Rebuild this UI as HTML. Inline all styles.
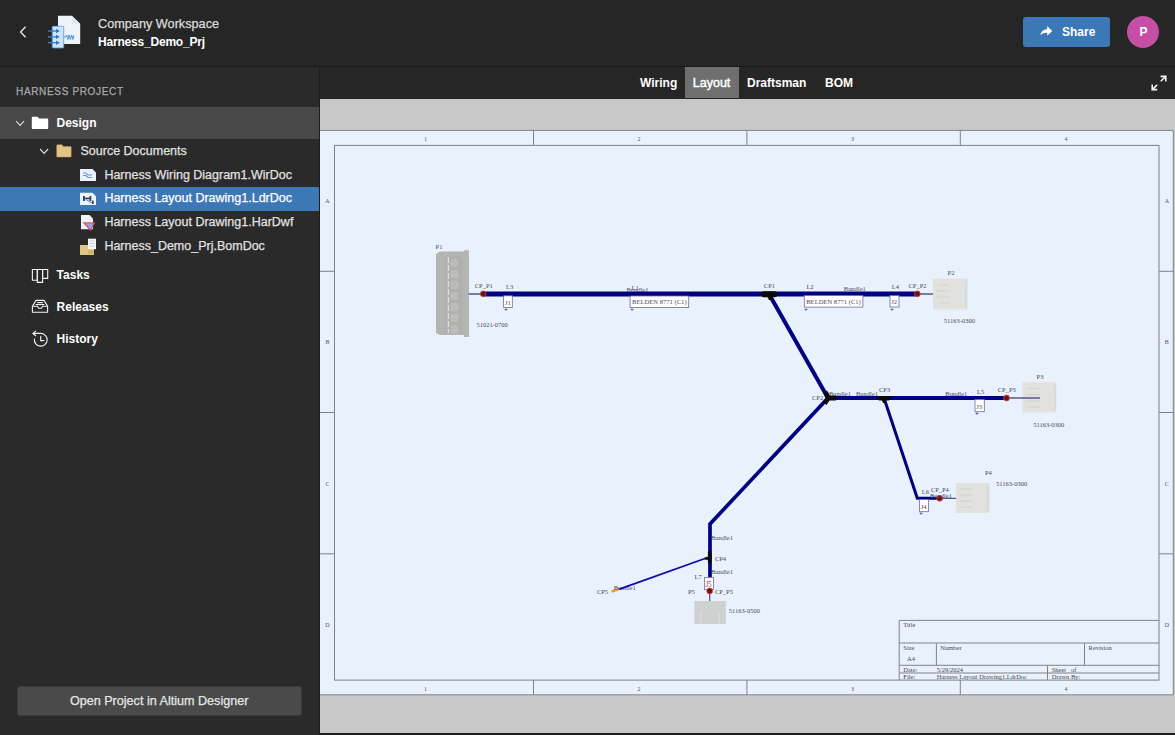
<!DOCTYPE html>
<html><head><meta charset="utf-8">
<style>
*{box-sizing:border-box;margin:0;padding:0}
html,body{width:1175px;height:735px;overflow:hidden;background:#262626;font-family:"Liberation Sans",sans-serif;color:#e6e6e6}
.abs{position:absolute}
#hdr{left:0;top:0;width:1175px;height:67px;background:#262626;border-bottom:1px solid #1a1a1a}
#side{left:0;top:67px;width:320px;height:668px;background:#2a2a2a;border-right:1px solid #1c1c1c}
#tabs{left:320px;top:67px;width:855px;height:32px;background:#262626}
#canvas{left:320px;top:99px;width:855px;height:634px;background:#c8c8c8}
#bot{left:320px;top:733px;width:855px;height:2px;background:#1d1d1d}
.t{position:absolute;white-space:nowrap;line-height:1;-webkit-text-stroke:0.25px currentColor}
.t[style*="bold"]{-webkit-text-stroke:0}
</style></head><body>
<div id="hdr" class="abs"></div>
<div id="side" class="abs"></div>
<div id="tabs" class="abs"></div>
<div id="canvas" class="abs"></div>
<div id="bot" class="abs"></div>

<!-- header -->
<svg class="abs" style="left:17px;top:24px" width="14" height="16" viewBox="17 24 14 16"><path d="M25.6 26.8 L20.6 32 L25.6 37.2" fill="none" stroke="#dedede" stroke-width="1.5"/></svg>
<svg class="abs" style="left:44px;top:12px" width="40" height="40" viewBox="44 12 40 40">
<path d="M58 15.8 H71.8 L80.2 23.7 V44.1 H58 Z" fill="#eef3f9"/>
<path d="M71.8 15.8 V23.7 H80.2" fill="#dfe6ee"/>
<path d="M63.8 37 H65.6 L66.6 34.9 L67.9 39.5 L69.1 34.9 L70.4 39.5 L71.6 34.9 L72.9 39.5 L73.9 35.2" fill="none" stroke="#3d88dc" stroke-width="0.9"/>
<rect x="52.3" y="26.3" width="11.4" height="21.6" rx="1" fill="#cfe4f8" stroke="#5ea2e8" stroke-width="0.9"/>
<g stroke="#3a7fd0" stroke-width="1.4"><path d="M48 31 H57"/><path d="M48 36.9 H57"/><path d="M48 42.7 H57"/></g>
<g fill="#2a78d4"><path d="M56 28.8 L59.8 31 L56 33.2Z"/><path d="M56 34.7 L59.8 36.9 L56 39.1Z"/><path d="M56 40.5 L59.8 42.7 L56 44.9Z"/></g>
</svg>
<div class="t" style="left:98px;top:18.2px;font-size:12.7px;color:#dcdcdc">Company Workspace</div>
<div class="t" style="left:98px;top:35.6px;font-size:12px;font-weight:bold;letter-spacing:-0.2px;color:#fff">Harness_Demo_Prj</div>

<div class="abs" style="left:1023px;top:17px;width:87px;height:30px;background:#3b78b5;border-radius:3px"></div>
<svg class="abs" style="left:1038px;top:24px" width="16" height="14" viewBox="1038 24 16 14"><path d="M1047.2 26 L1052.2 30.9 L1047.2 35.8 V32.9 C1044 32.7 1042 33.6 1040.2 35.6 C1040.9 31.6 1043.3 29.4 1047.2 29 Z" fill="#fff"/></svg>
<div class="t" style="left:1062px;top:25.7px;font-size:12px;font-weight:bold;color:#fff">Share</div>
<div class="abs" style="left:1127px;top:15.5px;width:32px;height:32px;background:#c64fa6;border-radius:50%"></div>
<div class="t" style="left:1139.5px;top:25.7px;font-size:12px;font-weight:bold;color:#fff">P</div>

<!-- tabs -->
<div class="abs" style="left:685px;top:67px;width:54px;height:31px;background:#6f6f6f"></div>
<div class="t" style="left:640px;top:76.7px;font-size:12px;font-weight:bold;color:#fff">Wiring</div>
<div class="t" style="left:692.8px;top:77.2px;font-size:12.5px;color:#fff;-webkit-text-stroke:0.45px #fff">Layout</div>
<div class="t" style="left:747px;top:76.7px;font-size:12px;font-weight:bold;color:#fff">Draftsman</div>
<div class="t" style="left:825px;top:76.7px;font-size:12px;font-weight:bold;color:#fff">BOM</div>
<svg class="abs" style="left:1148px;top:72px" width="22" height="22" viewBox="1148 72 22 22"><g fill="none" stroke="#f4f4f4" stroke-width="1.6"><path d="M1160.8 81.2 L1165.4 76.6"/><path d="M1160.6 76.4 H1165.8 V81.4"/><path d="M1157.2 84.8 L1152.6 89.4"/><path d="M1152.2 84.6 V89.6 H1157.2"/></g></svg>

<!-- sidebar -->
<div class="t" style="left:16px;top:86.8px;font-size:10px;letter-spacing:0.66px;color:#a8a8a8">HARNESS PROJECT</div>
<div class="abs" style="left:0;top:107px;width:319px;height:32px;background:#484848"></div>
<svg class="abs" style="left:14px;top:118px" width="12" height="10" viewBox="14 118 12 10"><path d="M16.2 121.2 L20.1 125.4 L24 121.2" fill="none" stroke="#dcdcdc" stroke-width="1.15"/></svg>
<svg class="abs" style="left:30px;top:115px" width="20" height="16" viewBox="30 115 20 16"><path d="M32.3 116.7 H37.6 L39.2 118.6 H47.4 Q48.2 118.6 48.2 119.4 V128.3 Q48.2 129.1 47.4 129.1 H32.6 Q31.8 129.1 31.8 128.3 V117.2 Q31.8 116.7 32.3 116.7Z" fill="#fff"/></svg>
<div class="t" style="left:56.5px;top:116.8px;font-size:12px;font-weight:bold;color:#fff">Design</div>

<svg class="abs" style="left:38px;top:146px" width="12" height="10" viewBox="38 146 12 10"><path d="M40.1 149 L44.1 153.3 L48.1 149" fill="none" stroke="#dcdcdc" stroke-width="1.15"/></svg>
<svg class="abs" style="left:55px;top:143px" width="18" height="16" viewBox="55 143 18 16"><path d="M57.2 144.8 H62 L63.4 146.6 H70.6 Q71.2 146.6 71.2 147.2 V156.4 Q71.2 157 70.6 157 H57.3 Q56.7 157 56.7 156.4 V145.3 Q56.7 144.8 57.2 144.8Z" fill="#e2c584" stroke="#b99452" stroke-width="0.5"/></svg>
<div class="t" style="left:80.5px;top:144.7px;font-size:12.5px;color:#e0e0e0">Source Documents</div>

<svg class="abs" style="left:78px;top:167px" width="20" height="16" viewBox="78 167 20 16"><path d="M80 169 H92.5 L96 172.4 V181 H80Z" fill="#eaf2fb"/><g fill="none" stroke="#6f8fe0" stroke-width="1.1"><path d="M83 173 H86 L88 175 H92"/><path d="M83 175.5 H86 L88 177.5 H92"/></g></svg>
<div class="t" style="left:104.4px;top:168.5px;font-size:12.5px;color:#e0e0e0">Harness Wiring Diagram1.WirDoc</div>

<div class="abs" style="left:0;top:187px;width:319px;height:24px;background:#3b78b5"></div>
<svg class="abs" style="left:78px;top:191px" width="20" height="16" viewBox="78 191 20 16"><path d="M80 192.8 H92.5 L96 196.2 V205 H80Z" fill="#eaf2fb"/><g fill="#3a3f48"><rect x="83" y="196" width="1.8" height="5"/><rect x="89.5" y="196" width="1.8" height="5"/><rect x="83" y="197.6" width="8" height="1.6"/><rect x="92" y="200.5" width="1.6" height="3.5"/></g><path d="M86 199.5 L92 203" stroke="#4d7fd8" stroke-width="1"/></svg>
<div class="t" style="left:104.4px;top:192.4px;font-size:12.5px;color:#fff">Harness Layout Drawing1.LdrDoc</div>

<svg class="abs" style="left:78px;top:213px" width="20" height="20" viewBox="78 213 20 20"><path d="M81 215 H89.5 L93 218.5 V229.3 H81Z" fill="#eef2f7"/><path d="M82.5 222.3 L95.5 222.3 L90.5 231.2Z" fill="#d04848" opacity="0.9"/><path d="M85.5 223.6 L93.5 223.6 L90.3 229Z" fill="#8fa8e8"/></svg>
<div class="t" style="left:104.4px;top:216.1px;font-size:12.5px;color:#e0e0e0">Harness Layout Drawing1.HarDwf</div>

<svg class="abs" style="left:78px;top:237px" width="20" height="20" viewBox="78 237 20 20"><rect x="80" y="245" width="14" height="10" fill="#e2c584"/><rect x="88" y="238.7" width="8" height="10.5" fill="#f4f6f8"/><g stroke="#b9c0c8" stroke-width="0.7"><path d="M89.5 241 H94.5"/><path d="M89.5 243.5 H94.5"/><path d="M89.5 246 H94.5"/></g><g stroke="#b99452" stroke-width="0.7"><path d="M88 251 H94"/><path d="M88 253 H94"/></g></svg>
<div class="t" style="left:104.4px;top:240px;font-size:12.5px;color:#e0e0e0">Harness_Demo_Prj.BomDoc</div>

<svg class="abs" style="left:30px;top:267px" width="20" height="18" viewBox="30 267 20 18"><g fill="none" stroke="#f2f2f2" stroke-width="1.1"><path d="M32.4 269.5 H37.3 V280.3 H32.4Z"/><path d="M37.3 269.5 H42.6 V282.4 H37.3Z"/><path d="M42.6 269.5 H47.7 V278.4 H42.6Z"/></g></svg>
<div class="t" style="left:56.6px;top:268.9px;font-size:12px;font-weight:bold;color:#fff">Tasks</div>
<svg class="abs" style="left:30px;top:298px" width="20" height="17" viewBox="30 298 20 17"><g fill="none" stroke="#f2f2f2" stroke-width="1.1"><path d="M32.4 306.2 L36 300.4 H44 L47.6 306.2 V312.2 H32.4Z"/><path d="M32.4 306.2 H37.4 L38.6 308.2 H41.4 L42.6 306.2 H47.6"/><path d="M37.2 302.6 H42.9"/><path d="M35.7 304.5 H44.3"/></g></svg>
<div class="t" style="left:56.6px;top:300.8px;font-size:12px;font-weight:bold;color:#fff">Releases</div>
<svg class="abs" style="left:30px;top:329px" width="20" height="20" viewBox="30 329 20 20"><g fill="none" stroke="#f2f2f2" stroke-width="1.15" stroke-linecap="round"><path d="M34.4 339 A6.4 6.4 0 1 0 41 333.4 H33.2"/><path d="M35.7 331.1 L33 333.4 L35.7 335.7"/><path d="M40.7 336.4 V340.6 H43.9"/></g></svg>
<div class="t" style="left:56.6px;top:332.6px;font-size:12px;font-weight:bold;color:#fff">History</div>

<div class="abs" style="left:17px;top:685.5px;width:285px;height:30.5px;background:#4a4a4a;border-radius:3px;border:1px solid #3a3a3a"></div>
<div class="t" style="left:69.9px;top:695px;font-size:12.6px;color:#e6e6e6">Open Project in Altium Designer</div>

<!-- drawing -->
<svg class="abs" style="left:320px;top:99px" width="855" height="634" viewBox="320 99 855 634" font-family="Liberation Serif, serif">
<rect x="320" y="130" width="853.5" height="565" fill="#e9f1fd"/>
<g fill="none" stroke="#7d838b" stroke-width="1">
<path d="M320 130.4 H1173.3 V695"/><path d="M320 694.8 H1173.3"/>
<rect x="334.5" y="145.4" width="824.5" height="534.7"/>
<path d="M533.5 130.4 V145.4 M533.5 680 V694.8"/>
<path d="M746.9 130.4 V145.4 M746.9 680 V694.8"/>
<path d="M960.3 130.4 V145.4 M960.3 680 V694.8"/>
<path d="M320 271.3 H334.5 M1159 271.3 H1173.3"/>
<path d="M320 412.5 H334.5 M1159 412.5 H1173.3"/>
<path d="M320 553.8 H334.5 M1159 553.8 H1173.3"/>
<path d="M899.2 620.4 H1159 M899.2 620.4 V680 M899.2 643 H1159 M899.2 665.3 H1159 M899.2 673 H1159 M936.4 643 V665.3 M1084.5 643 V665.3 M1047.5 665.3 V680"/>
</g>
<g fill="#50545e">
<text transform="translate(425.6 140.8) scale(1 1.06)" font-size="6" text-anchor="middle">1</text>
<text transform="translate(425.6 690.6) scale(1 1.06)" font-size="6" text-anchor="middle">1</text>
<text transform="translate(639.1 140.8) scale(1 1.06)" font-size="6" text-anchor="middle">2</text>
<text transform="translate(639.1 690.6) scale(1 1.06)" font-size="6" text-anchor="middle">2</text>
<text transform="translate(852.6 140.8) scale(1 1.06)" font-size="6" text-anchor="middle">3</text>
<text transform="translate(852.6 690.6) scale(1 1.06)" font-size="6" text-anchor="middle">3</text>
<text transform="translate(1066.1 140.8) scale(1 1.06)" font-size="6" text-anchor="middle">4</text>
<text transform="translate(1066.1 690.6) scale(1 1.06)" font-size="6" text-anchor="middle">4</text>
<text transform="translate(327.5 203.0) scale(1 1.06)" font-size="6" text-anchor="middle">A</text>
<text transform="translate(1166.8 203.0) scale(1 1.06)" font-size="6" text-anchor="middle">A</text>
<text transform="translate(327.5 344.29999999999995) scale(1 1.06)" font-size="6" text-anchor="middle">B</text>
<text transform="translate(1166.8 344.29999999999995) scale(1 1.06)" font-size="6" text-anchor="middle">B</text>
<text transform="translate(327.5 485.5) scale(1 1.06)" font-size="6" text-anchor="middle">C</text>
<text transform="translate(1166.8 485.5) scale(1 1.06)" font-size="6" text-anchor="middle">C</text>
<text transform="translate(327.5 626.8) scale(1 1.06)" font-size="6" text-anchor="middle">D</text>
<text transform="translate(1166.8 626.8) scale(1 1.06)" font-size="6" text-anchor="middle">D</text>
</g>
<g fill="#44474f">
<text transform="translate(903.3 626.9) scale(1 1.06)" font-size="6.5">Title</text>
<text transform="translate(903.3 649.9) scale(1 1.06)" font-size="6.5">Size</text>
<text transform="translate(907 660.9) scale(1 1.06)" font-size="6.5">A4</text>
<text transform="translate(940.3 649.9) scale(1 1.06)" font-size="6.5">Number</text>
<text transform="translate(1088.6 649.9) scale(1 1.06)" font-size="6.5">Revision</text>
<text transform="translate(903.3 671.6) scale(1 1.06)" font-size="6.5">Date:</text>
<text transform="translate(936.7 671.6) scale(1 1.06)" font-size="6.5">5/29/2024</text>
<text transform="translate(903.3 678.8) scale(1 1.06)" font-size="6.5">File:</text>
<text transform="translate(936.7 678.8) scale(1 1.06)" font-size="6.5">Harness Layout Drawing1.LdrDoc</text>
<text transform="translate(1051.7 671.6) scale(1 1.06)" font-size="6.5">Sheet&#160;&#160;&#160;of</text>
<text transform="translate(1051.7 678.8) scale(1 1.06)" font-size="6.5">Drawn By:</text>
</g>
<g>
<path d="M436 254 L440 251.5 H464 V250.2 H469 V337 H464 V335 H440 L436 333Z" fill="#b4b4b2"/>
<rect x="445" y="256" width="17" height="77" fill="#b0b0ae"/>
<path d="M448.3 257 V333" stroke="#ececea" stroke-width="1" stroke-dasharray="6 2"/>
<g fill="#bcbcba"><rect x="450.5" y="259" width="8" height="8" rx="2.5"/><rect x="450.5" y="270" width="8" height="8" rx="2.5"/><rect x="450.5" y="281" width="8" height="8" rx="2.5"/><rect x="450.5" y="292" width="8" height="8" rx="2.5"/><rect x="450.5" y="303" width="8" height="8" rx="2.5"/><rect x="450.5" y="314" width="8" height="8" rx="2.5"/><rect x="450.5" y="325" width="8" height="8" rx="2.5"/></g>
<rect x="933" y="278.6" width="34.6" height="31" fill="#e1e1de"/>
<g stroke="#cdcdca" stroke-width="0.8"><path d="M938 285 H949 M936 291 H950 M936 297 H950 M938 303 H949 M966 281 V307"/></g>
<rect x="1022.6" y="382.3" width="33.8" height="30.1" fill="#e1e1de"/>
<g stroke="#cdcdca" stroke-width="0.8"><path d="M1028 388.5 H1039 M1026 394.5 H1040 M1026 401 H1040 M1028 407 H1039 M1055 385 V410"/></g>
<rect x="956" y="483" width="33.5" height="30" fill="#e1e1de"/>
<g stroke="#cdcdca" stroke-width="0.8"><path d="M961 489 H972 M959 495 H973 M959 501 H973 M961 507 H972 M988 486 V511"/></g>
<rect x="694.4" y="601" width="31.4" height="23" fill="#cfd0d0"/>
<g stroke="#e4e4e4" stroke-width="0.8"><path d="M701 611 V624 M719 611 V624"/></g>
</g>
<g stroke="#55558f" stroke-width="1.3" fill="none"><path d="M468.8 294 H483 M920 294 H933 M1010 398 H1040 M942 498.3 H956 M709.7 594 V601"/></g>
<g stroke="#000080" fill="none" stroke-linejoin="miter">
<path d="M483 294 H917.4" stroke-width="5"/>
<path d="M769 294 L828 398" stroke-width="4"/>
<path d="M828 398 H1006.6" stroke-width="4"/>
<path d="M884 398 L917.3 498.3 H939.7" stroke-width="3"/>
<path d="M828 398 L710 524 V591" stroke-width="3.7"/>
</g>
<path d="M612.5 591.3 L618.8 589" stroke="#e2a535" stroke-width="2.6" stroke-linecap="round"/>
<g fill="#0b0b0b">
<rect x="761" y="291.3" width="16.4" height="6" rx="3"/><path d="M767 296 H773 L771 300 H769Z"/>
<path d="M823.5 393 L827 390.5 L830 395.5 H836 V400.5 H829.5 L826.5 405 L823 402.5 L825.5 398Z"/>
<rect x="877.4" y="396" width="13.3" height="4.4" rx="2.2"/><path d="M881.5 399 H886 L885.5 403 H883Z"/>
<rect x="707.9" y="550.8" width="3.8" height="13" rx="1.8"/><path d="M708.5 556.5 V560 L704.5 559.5 V557.5Z"/>
</g>
<g fill="#ffffff" stroke="#6c6ca6" stroke-width="0.8">
<rect x="503.6" y="295.8" width="8.7" height="11.6"/>
<rect x="630.1" y="296" width="58.6" height="11.6"/>
<rect x="804.3" y="295.5" width="58.6" height="11.6"/>
<rect x="890" y="295.5" width="9" height="11.5"/>
<rect x="975" y="399.6" width="9.3" height="12.1"/>
<rect x="919.5" y="499.6" width="9.0" height="12.1"/>
<rect x="704.4" y="577.4" width="9.0" height="12.2"/>
</g>
<g fill="#4a4a60">
<text transform="translate(505 304.8) scale(1 1.06)" font-size="6.6">J1</text>
<text transform="translate(632 304) scale(1 1.06)" font-size="6.6">BELDEN 8771 (C1)</text>
<text transform="translate(806.2 303.5) scale(1 1.06)" font-size="6.6">BELDEN 8771 (C1)</text>
<text transform="translate(891.2 304) scale(1 1.06)" font-size="6.6">J2</text>
<text transform="translate(976.3 408.6) scale(1 1.06)" font-size="6.6">J3</text>
<text transform="translate(920.8 508.6) scale(1 1.06)" font-size="6.6">J4</text>
<text transform="translate(705.4 586.6) scale(1 1.06)" font-size="7" fill="#a03030">J5</text>
</g>
<g stroke="#55558f" stroke-width="0.7"><path d="M504.5 309.5 h3 M506 308 v3 M630.5 309.5 h3 M632 308 v3 M804.5 309.5 h3 M806 308 v3 M890.5 309.5 h3 M892 308 v3 M975.5 413.5 h3 M977 412 v3 M919.5 513.5 h3 M921 512 v3"/></g>
<g fill="#7a0c0c" stroke="#c44a4a" stroke-width="0.8">
<circle cx="483.2" cy="293.8" r="2.9"/>
<circle cx="917.4" cy="293.8" r="2.9"/>
<circle cx="1006.6" cy="398" r="2.9"/>
<circle cx="939.7" cy="498.3" r="2.9"/>
<circle cx="709.7" cy="591" r="2.9"/>
</g>
<g fill="#4a4a60">
<text transform="translate(435.6 248.7) scale(1 1.06)" font-size="6.5">P1</text>
<text transform="translate(474.7 288) scale(1 1.06)" font-size="6.5">CP_P1</text>
<text transform="translate(506 289.4) scale(1 1.06)" font-size="6.5">L3</text>
<text transform="translate(476.4 326.8) scale(1 1.06)" font-size="6.5">51021-0700</text>
<text transform="translate(626.5 291.5) scale(1 1.06)" font-size="6.5">Bundle1</text>
<text transform="translate(631.5 289.5) scale(1 1.06)" font-size="6.5">L1</text>
<text transform="translate(763.8 287.9) scale(1 1.06)" font-size="6.5">CP1</text>
<text transform="translate(806.4 289) scale(1 1.06)" font-size="6.5">L2</text>
<text transform="translate(843.8 291) scale(1 1.06)" font-size="6.5">Bundle1</text>
<text transform="translate(891.8 289) scale(1 1.06)" font-size="6.5">L4</text>
<text transform="translate(908.5 288) scale(1 1.06)" font-size="6.5">CP_P2</text>
<text transform="translate(947.6 274.8) scale(1 1.06)" font-size="6.5">P2</text>
<text transform="translate(943.8 322.9) scale(1 1.06)" font-size="6.5">51163-0300</text>
<text transform="translate(812 400.4) scale(1 1.06)" font-size="6.5">CP2</text>
<text transform="translate(829 396) scale(1 1.06)" font-size="6.5">Bundle1</text>
<text transform="translate(856 396) scale(1 1.06)" font-size="6.5">Bundle1</text>
<text transform="translate(879 391.6) scale(1 1.06)" font-size="6.5">CP3</text>
<text transform="translate(977 393.8) scale(1 1.06)" font-size="6.5">L5</text>
<text transform="translate(945.3 396) scale(1 1.06)" font-size="6.5">Bundle1</text>
<text transform="translate(997.7 392) scale(1 1.06)" font-size="6.5">CP_P3</text>
<text transform="translate(1036.6 378.5) scale(1 1.06)" font-size="6.5">P3</text>
<text transform="translate(1033.2 427) scale(1 1.06)" font-size="6.5">51163-0300</text>
<text transform="translate(985 474.7) scale(1 1.06)" font-size="6.5">P4</text>
<text transform="translate(996 485.5) scale(1 1.06)" font-size="6.5">51163-0300</text>
<text transform="translate(921.8 493.8) scale(1 1.06)" font-size="6.5">L6</text>
<text transform="translate(930.8 491.7) scale(1 1.06)" font-size="6.5">CP_P4</text>
<text transform="translate(930 498) scale(1 1.06)" font-size="6.5">Bundle1</text>
<text transform="translate(711 539.9) scale(1 1.06)" font-size="6.5">Bundle1</text>
<text transform="translate(714.9 560.6) scale(1 1.06)" font-size="6.5">CP4</text>
<text transform="translate(711 573.7) scale(1 1.06)" font-size="6.5">Bundle1</text>
<text transform="translate(694.5 578.6) scale(1 1.06)" font-size="6.5">L7</text>
<text transform="translate(596.9 594) scale(1 1.06)" font-size="6.5">CP5</text>
<text transform="translate(613.7 589.7) scale(1 1.06)" font-size="6.5">Bundle1</text>
<text transform="translate(688 593.6) scale(1 1.06)" font-size="6.5">P5</text>
<text transform="translate(714.9 593.6) scale(1 1.06)" font-size="6.5">CP_P5</text>
<text transform="translate(728.8 612.5) scale(1 1.06)" font-size="6.5">51163-0500</text>
</g>
<path d="M705 558.5 L619.4 589.2" stroke="#0c0cae" stroke-width="1.8"/>
</svg>
</body></html>
